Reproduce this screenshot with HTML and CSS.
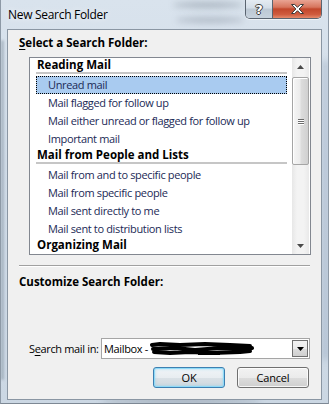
FILE: index.html
```html
<!DOCTYPE html>
<html>
<head>
<meta charset="utf-8">
<link rel="stylesheet" href="styles.css">
</head>
<body>
<div class="window">
  <div class="glass">
    <span class="blur b1"></span><span class="blur b2"></span><span class="blur b3"></span><span class="blur b4"></span><span class="blur b5"></span>
  </div>
  <div class="titlebar">
    <span class="title">New Search Folder</span>
    <div class="caption-btns">
      <div class="cap help">?</div>
      <div class="cap close">
        <svg width="15" height="12" viewBox="0 0 15 12"><path d="M1.5 1.5h3.2l2.8 2.8 2.8-2.8h3.2l-4.4 4.5 4.4 4.5h-3.2l-2.8-2.8-2.8 2.8h-3.2l4.4-4.5z" fill="#fff" stroke="#3b3b3b" stroke-width="1" stroke-linejoin="round"/></svg>
      </div>
    </div>
  </div>
  <div class="client">
    <div class="section-label first"><u>S</u>elect a Search Folder:</div>
    <div class="listbox">
      <div class="list">
        <div class="group">Reading Mail</div>
        <div class="item selected">Unread mail</div>
        <div class="item">Mail flagged for follow up</div>
        <div class="item">Mail either unread or flagged for follow up</div>
        <div class="item">Important mail</div>
        <div class="group">Mail from People and Lists</div>
        <div class="item">Mail from and to specific people</div>
        <div class="item">Mail from specific people</div>
        <div class="item">Mail sent directly to me</div>
        <div class="item">Mail sent to distribution lists</div>
        <div class="group last">Organizing Mail</div>
      </div>
      <div class="scrollbar">
        <div class="sb-btn"><svg width="7" height="4" viewBox="0 0 7 4"><path d="M0 4L3.5 0L7 4z" fill="#4a4a4a"/></svg></div>
        <div class="sb-track">
          <div class="thumb"><div class="grip"><i></i><i></i><i></i></div></div>
        </div>
        <div class="sb-btn"><svg width="7" height="4" viewBox="0 0 7 4"><path d="M0 0L7 0L3.5 4z" fill="#4a4a4a"/></svg></div>
      </div>
    </div>
    <div class="separator"></div>
    <div class="section-label">Customize Search Folder:</div>
    <div class="search-row">
      <span class="field-label">S<u>e</u>arch mail in:</span>
      <div class="combo">
        <span class="combo-text">Mailbox - </span>
        <svg class="scribble" width="104" height="14" viewBox="0 0 104 14">
          <path d="M2 3 L10 2 L30 3 L55 2 L80 3 L100 4 M3 7 L25 6 L45 8 L70 6 L96 7 L102 6 M4 10 L20 11 L40 10 L62 11 L90 10 L100 9" stroke="#000" stroke-width="4" fill="none" stroke-linecap="round" stroke-linejoin="round"/>
          <path d="M48 12 L70 12" stroke="#000" stroke-width="2" fill="none"/>
        </svg>
        <div class="combo-btn"><svg width="7" height="4" viewBox="0 0 7 4"><path d="M0 0L7 0L3.5 4z" fill="#000"/></svg></div>
      </div>
    </div>
    <div class="buttons">
      <div class="btn default">OK</div>
      <div class="btn">Cancel</div>
    </div>
  </div>
</div>
</body>
</html>
```

FILE: styles.css
```css
* { box-sizing: border-box; }
html, body { margin: 0; padding: 0; }
body {
  width: 329px;
  height: 404px;
  overflow: hidden;
  font-family: "Open Sans", "Liberation Sans", sans-serif;
  font-size: 11px;
  letter-spacing: -0.35px;
  color: #000;
}
.window {
  position: relative;
  width: 329px;
  height: 404px;
  background: linear-gradient(180deg, #d9e3ed 0%, #d1dce8 40%, #cbd7e3 100%);
  border-left: 1px solid #8d99a6;
  border-right: 1px solid #8d99a6;
  border-bottom: 1px solid #7d8894;
  display: flex;
  flex-direction: column;
}
.glass { position: absolute; inset: 0; overflow: hidden; pointer-events: none; }
.blur { position: absolute; border-radius: 50%; filter: blur(3px); background: rgba(90, 100, 115, 0.35); }
.b1 { left: 172px; top: 2px; width: 70px; height: 6px; }
.b2 { left: 175px; top: 17px; width: 68px; height: 6px; background: rgba(90,100,115,0.3); }
.b3 { left: 0px; top: 40px; width: 3px; height: 340px; border-radius: 2px; background: rgba(120,135,150,0.45); filter: blur(1px); }
.b4 { left: 322px; top: 60px; width: 5px; height: 300px; border-radius: 2px; background: rgba(110,130,160,0.35); }
.b5 { left: 100px; top: 398px; width: 160px; height: 6px; background: rgba(90,100,115,0.35); }

.titlebar {
  position: relative;
  height: 29px;
  display: flex;
  justify-content: space-between;
  align-items: flex-start;
  padding: 0 6px 0 7px;
}
.title {
  margin-top: 7px;
  font-size: 12px;
  letter-spacing: -0.3px;
  line-height: 16px;
  color: #000;
  text-shadow: 0 0 6px rgba(255,255,255,0.9);
}
.caption-btns {
  display: flex;
  height: 19px;
  border: 1px solid #5a6470;
  border-top: none;
  border-radius: 0 0 5px 5px;
  overflow: hidden;
  box-shadow: 0 1px 0 rgba(255,255,255,0.6);
}
.cap { height: 18px; display: flex; align-items: center; justify-content: center; }
.help {
  width: 27px;
  border-right: 1px solid #5a6470;
  background: linear-gradient(180deg, #e4ebf2 0%, #d3dde7 45%, #bcc8d4 50%, #c7d2dd 100%);
  color: #fff;
  font-family: "DejaVu Sans", sans-serif;
  font-weight: bold;
  font-size: 13px;
  letter-spacing: 0;
  text-shadow: -1px 0 #3a3a3a, 1px 0 #3a3a3a, 0 -1px #3a3a3a, 0 1px #3a3a3a;
}
.close {
  width: 48px;
  background: linear-gradient(180deg, #e9a493 0%, #d7755d 40%, #c2472c 50%, #cf5b3e 80%, #e58a6c 100%);
}

.client {
  position: relative;
  margin: 0 6px 0 6px;
  height: 371px;
  border: 1px solid #8a96a3;
  background: #f0f0f0;
  display: flex;
  flex-direction: column;
}
.section-label {
  font-weight: bold;
  font-size: 11.5px;
  line-height: 16px;
  margin: 7px 0 0 11px;
  letter-spacing: 0;
}
.section-label.first { margin-top: 5px; }
u { text-decoration-thickness: 1px; text-underline-offset: 2px; }

.listbox {
  margin: 6px 0 0 21px;
  width: 282px;
  height: 198px;
  border: 1px solid #828790;
  background: #fff;
  display: flex;
}
.list {
  flex: 1;
  padding: 0 5px 0 6px;
  overflow: hidden;
}
.group {
  height: 16px;
  line-height: 14px;
  padding-left: 1px;
  font-weight: bold;
  font-size: 11.5px;
  border-bottom: 2px solid #c6c6c6;
  margin-bottom: 2px;
  color: #000;
  letter-spacing: 0;
}
.group.last { border-bottom-color: transparent; }
.item {
  height: 18px;
  line-height: 16px;
  padding-left: 11px;
  color: #1b2a56;
  border: 1px solid transparent;
}
.item.selected {
  background: #a9cbf0;
  border: 1px dotted #000;
}

.scrollbar {
  width: 17px;
  display: flex;
  flex-direction: column;
  background: linear-gradient(90deg, #e7e7e7 0%, #f3f3f3 30%, #f3f3f3 70%, #e9e9e9 100%);
  margin-right: 1px;
}
.sb-btn { height: 17px; display: flex; align-items: center; justify-content: center; }
.sb-track { flex: 1; padding-top: 2px; }
.thumb {
  height: 88px;
  border: 1px solid #a5a5a5;
  border-radius: 2px;
  background: linear-gradient(90deg, #f6f6f6 0%, #ececec 45%, #dcdcdc 55%, #d0d0d0 100%);
  box-shadow: inset 1px 1px 0 #fff;
  display: flex;
  align-items: center;
  justify-content: center;
}
.grip { display: flex; flex-direction: column; gap: 1px; }
.grip i { display: block; width: 6px; height: 1px; background: #6b6b6b; box-shadow: 0 1px 0 #fff; }

.separator {
  margin: 10px 0 0 11px;
  width: 291px;
  height: 2px;
  border-top: 1px solid #a0a0a0;
  border-bottom: 1px solid #fff;
}

.search-row {
  margin-top: auto;
  display: flex;
  align-items: center;
  padding-left: 21px;
}
.field-label { width: 72px; line-height: 16px; }
.combo {
  width: 209px;
  height: 21px;
  border: 1px solid #a5a5a5;
  background: #fff;
  display: flex;
  align-items: center;
  padding: 0 1px 0 2px;
}
.combo-text { line-height: 16px; white-space: pre; }
.scribble { margin-left: 0; }
.combo-btn {
  margin-left: auto;
  width: 16px;
  height: 17px;
  border: 1px solid #707070;
  background: linear-gradient(180deg, #f2f2f2 0%, #ebebeb 50%, #dddddd 51%, #cfcfcf 100%);
  display: flex;
  align-items: center;
  justify-content: center;
}

.buttons {
  display: flex;
  justify-content: flex-end;
  gap: 12px;
  margin: 8px 12px 11px 0;
}
.btn {
  width: 72px;
  height: 21px;
  border: 1px solid #707070;
  border-radius: 3px;
  background: linear-gradient(180deg, #f2f2f2 0%, #ebebeb 50%, #dddddd 51%, #cfcfcf 100%);
  box-shadow: inset 0 0 0 1px rgba(255,255,255,0.8);
  display: flex;
  align-items: center;
  justify-content: center;
  letter-spacing: -0.2px;
}
.btn.default {
  border-color: #3c7fb1;
  background: linear-gradient(180deg, #f0f4f7 0%, #e8edf1 50%, #dae1e6 51%, #cfd8de 100%);
  box-shadow: inset 0 0 0 1px #8fdaf7, inset 0 0 3px 1px rgba(120, 205, 245, 0.6);
}
```
